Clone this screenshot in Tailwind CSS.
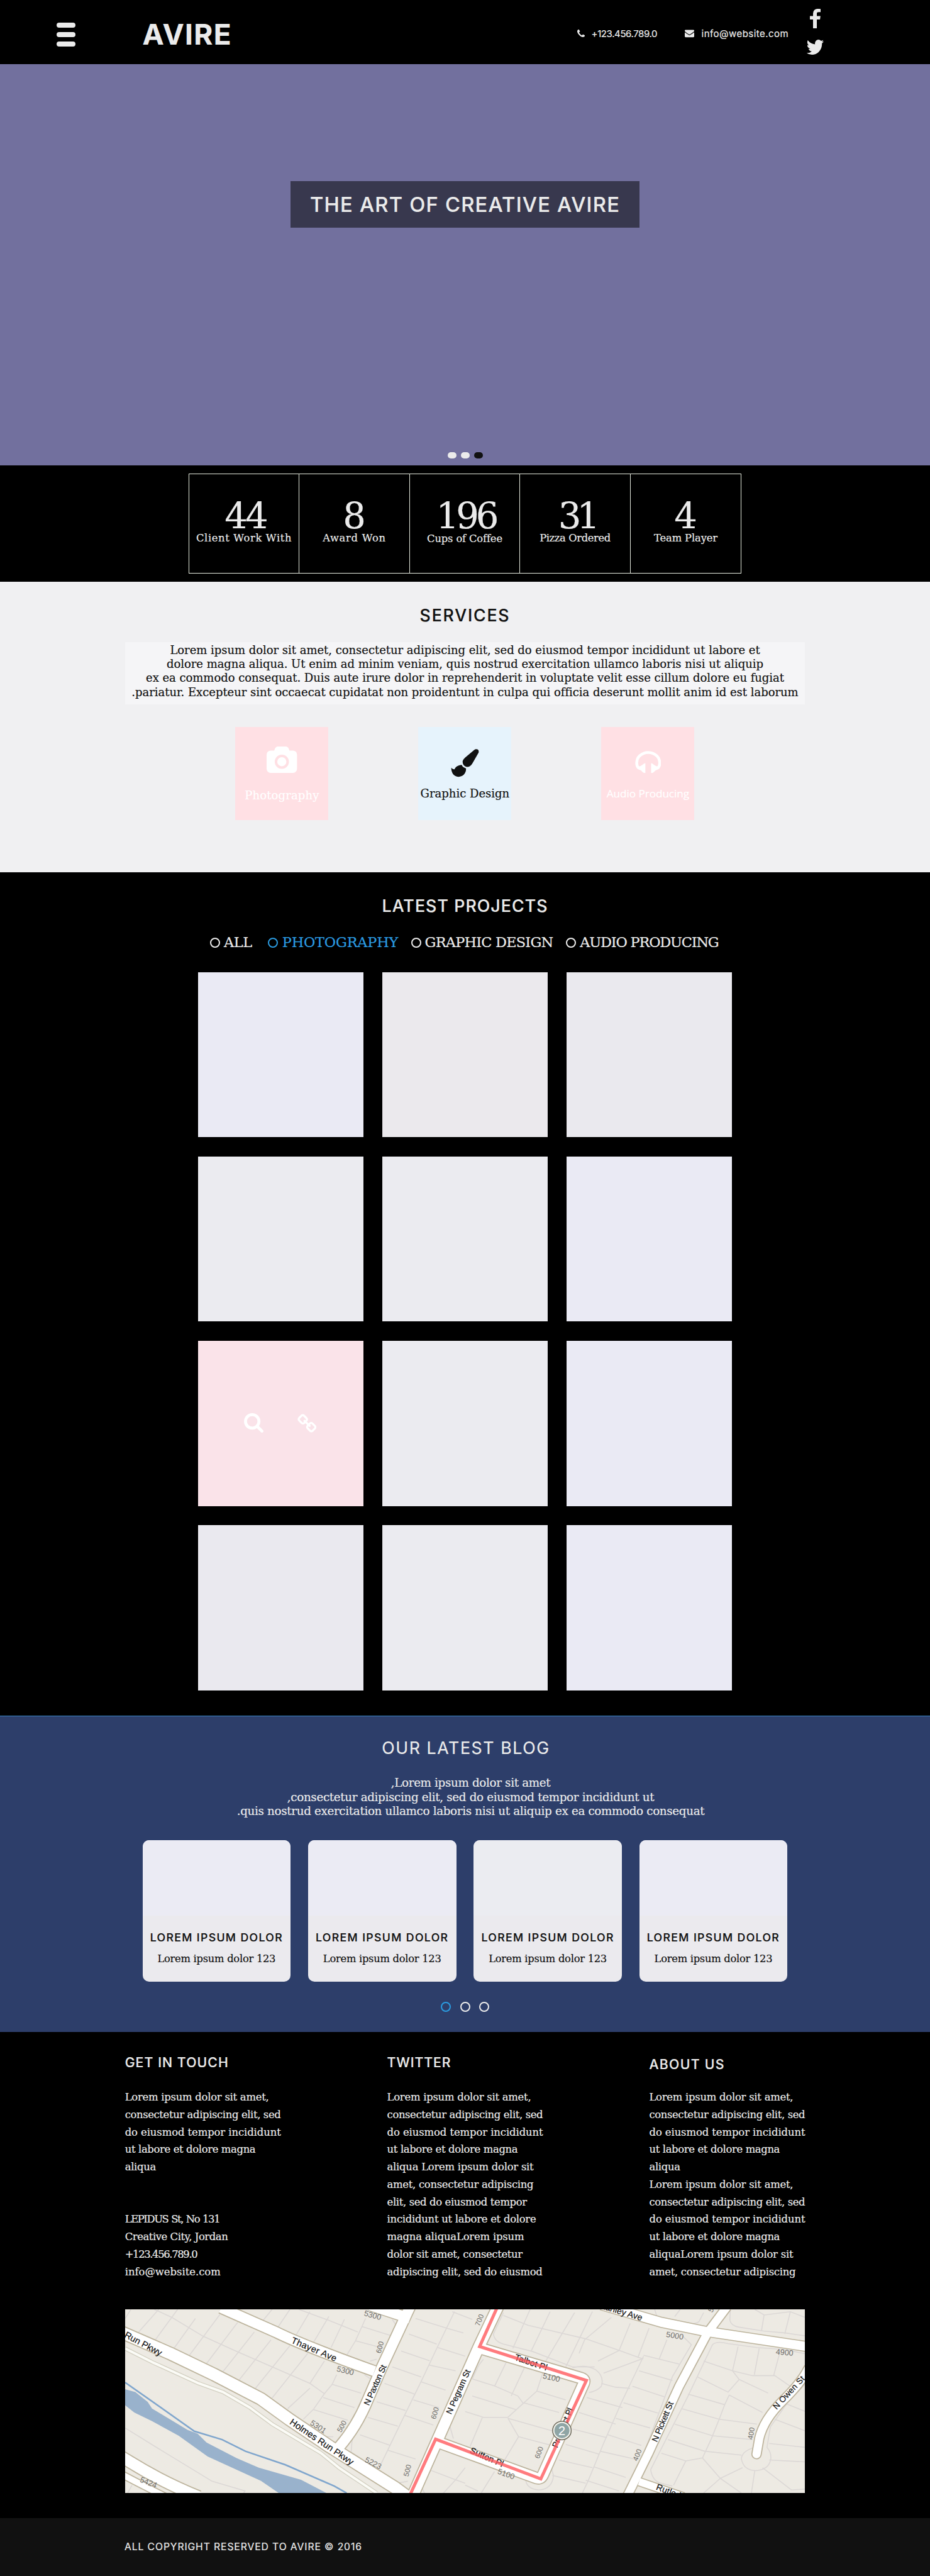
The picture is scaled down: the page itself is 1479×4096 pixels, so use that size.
<!DOCTYPE html>
<html lang="en">
<head>
<meta charset="utf-8">
<title>Avire</title>
<script src="https://cdn.jsdelivr.net/npm/@tailwindcss/browser@4"></script>
</head>
<body class="bg-black text-[#ebebeb] w-[1479px] overflow-x-hidden font-['DejaVu_Serif',serif] [-webkit-text-stroke:0.2px]">

<header class="h-[101.7px] flex items-start pl-[89.6px] pr-[169px] font-['Inter',sans-serif]">
  <div class="mt-9 flex flex-col gap-[6.4px]">
    <i class="block w-[30px] h-[8.4px] rounded-[4px] bg-[#ebebeb]"></i>
    <i class="block w-[30px] h-[8.4px] rounded-[4px] bg-[#ebebeb]"></i>
    <i class="block w-[30px] h-[8.4px] rounded-[4px] bg-[#ebebeb]"></i>
  </div>
  <div class="ml-[107px] mt-[31.5px] text-[45.8px] leading-[46px] font-bold whitespace-nowrap tracking-[1.37px]">AVIRE</div>
  <div class="ml-auto flex items-start text-[15px] leading-5 whitespace-nowrap">
    <svg class="mt-[47px] w-[12px] h-[12px]" viewBox="192 128 1408 1408" fill="#ebebeb"><path d="M1600 1240q0 27-10 70.500t-21 68.500q-21 50-122 106-94 51-186 51-27 0-53-3.500t-57.500-12.500-47-14.500-55.500-20.500-49-18q-98-35-175-83-127-79-264-216t-216-264q-48-77-83-175-3-9-18-49t-20.500-55.500-14.500-47-12.500-57.500-3.500-53q0-92 51-186 56-101 106-122 25-11 68.500-21t70.500-10q14 0 21 3 18 6 53 76 11 19 30 54t35 63.500 31 53.500q3 4 17.500 25t21.500 35.500 7 28.500q0 20-28.500 50t-62 55-62 53-28.500 46q0 9 5 22.500t8.500 20.500 14 24 11.500 19q76 137 174 235t235 174q2 1 19 11.500t24 14 20.500 8.500 22.500 5q18 0 46-28.500t53-62 55-62 50-28.500q14 0 28.500 7t35.500 21.500 25 17.500q25 15 53.500 31t63.500 35 54 30q70 35 76 53 3 7 3 21z"/></svg>
    <div class="ml-[11px] mt-[43.7px] w-[105px] tracking-[-0.39px]">+123.456.789.0</div>
    <svg class="ml-[43.5px] mt-[47px] w-[15px] h-[12.6px]" viewBox="0 256 1792 1408" fill="#ebebeb"><path d="M1792 710v794q0 66-47 113t-113 47h-1472q-66 0-113-47t-47-113v-794q44 49 101 87 362 246 497 345 57 42 92.500 65.500t94.500 48 110 24.500h2q51 0 110-24.500t94.500-48 92.500-65.500q170-123 498-345 57-39 100-87zm0-294q0 79-49 151t-122 123q-376 261-468 325-10 7-42.500 31t-54 38.500-52 32.500-57.500 27-50 9h-2q-23 0-50-9t-57.500-27-52-32.500-54-38.500-42.500-31q-91-64-262-182.500t-205-142.500q-62-42-117-115.500t-55-136.500q0-78 41.500-130t118.500-52h1472q65 0 112.500 47t47.500 113z"/></svg>
    <div class="ml-[11.5px] mt-[43.7px] w-[137.4px] tracking-[0.46px]">info@website.com</div>
    <div class="ml-[29px] mt-[13.9px] flex flex-col items-center">
      <svg class="w-[17px] h-[31.2px]" viewBox="479 0 864 1664" preserveAspectRatio="none" fill="#ebebeb"><path d="M1343 12v264h-157q-86 0-116 36t-30 108v189h293l-39 296h-254v759h-306v-759h-255v-296h255v-218q0-186 104-288.500t277-102.500q147 0 228 12z"/></svg>
      <svg class="mt-[17.8px] w-[28px] h-[24px]" viewBox="64 256 1620 1280" preserveAspectRatio="none" fill="#ebebeb"><path d="M1684 408q-67 98-162 167 1 14 1 42 0 130-38 259.500t-115.500 248.500-184.500 210.500-258 146-323 54.500q-271 0-496-145 35 4 78 4 225 0 401-138-105-2-188-64.500t-114-159.500q33 5 61 5 43 0 85-11-112-23-185.500-111.500t-73.500-205.500v-4q68 38 146 41-66-44-105-115t-39-154q0-88 44-163 121 149 294.500 238.500t371.500 99.500q-8-38-8-74 0-134 94.500-228.500t228.500-94.500q140 0 236 102 109-21 205-78-37 115-142 178 93-10 186-50z"/></svg>
    </div>
  </div>
</header>

<section class="h-[638px] bg-[#72709e] flex flex-col items-center">
  <h1 class="mt-[186.8px] w-[554.6px] h-[74px] bg-[#38384e] flex items-center justify-center font-['Inter',sans-serif] font-medium text-[32.7px] whitespace-nowrap tracking-[1.23px]">THE ART OF CREATIVE AVIRE</h1>
  <div class="mt-[356.8px] flex gap-[7px]">
    <i class="block w-[14px] h-[9.4px] rounded-[5px] bg-[#ebebeb]"></i>
    <i class="block w-[14px] h-[9.4px] rounded-[5px] bg-[#ebebeb]"></i>
    <i class="block w-[14px] h-[9.4px] rounded-[5px] bg-[#111]"></i>
  </div>
</section>

<section class="h-[185px] pt-[12.9px]">
  <div class="mx-auto w-[879.5px] h-[159.4px] border border-[#e6ebdf] grid grid-cols-5 divide-x divide-[#e6ebdf] text-center whitespace-nowrap text-[16.3px] leading-5">
    <div class="pt-[42.3px]"><div class="text-[57.6px] leading-[50px] tracking-[-4px] -mr-1">44</div><span class="tracking-[0.66px]">Client Work With</span></div>
    <div class="pt-[42.3px]"><div class="text-[57.6px] leading-[50px]">8</div><span class="tracking-[0.75px]">Award Won</span></div>
    <div class="pt-[42.3px]"><div class="text-[57.6px] leading-[50px] tracking-[-5px] -mr-1">196</div><div class="pt-px tracking-[-0.12px]">Cups of Coffee</div></div>
    <div class="pt-[42.3px]"><div class="text-[57.6px] leading-[50px] tracking-[-7px] -mr-1.5">31</div><span class="tracking-[-0.35px]">Pizza Ordered</span></div>
    <div class="pt-[42.3px]"><div class="text-[57.6px] leading-[50px]">4</div><span class="tracking-[-0.1px]">Team Player</span></div>
  </div>
</section>

<section class="h-[462.2px] bg-[#f0f0f2] text-[#111] pt-[38.4px]">
  <h2 class="text-center font-['Inter',sans-serif] font-medium text-[26.7px] leading-[30px] tracking-[1.82px]">SERVICES</h2>
  <div class="mt-[27.7px] mx-auto w-[1081.6px] h-[98.9px] bg-[#f5f5f7] pt-[2.3px] text-center text-[18px] leading-[22.2px] whitespace-nowrap tracking-[-0.03px]">
    <p>Lorem ipsum dolor sit amet, consectetur adipiscing elit, sed do eiusmod tempor incididunt ut labore et</p>
    <p>dolore magna aliqua. Ut enim ad minim veniam, quis nostrud exercitation ullamco laboris nisi ut aliquip</p>
    <p>ex ea commodo consequat. Duis aute irure dolor in reprehenderit in voluptate velit esse cillum dolore eu fugiat</p>
    <p>.pariatur. Excepteur sint occaecat cupidatat non proidentunt in culpa qui officia deserunt mollit anim id est laborum</p>
  </div>
  <div class="mt-9 ml-[374.4px] flex gap-[143px] text-center text-[18px] leading-[22px] whitespace-nowrap">
    <div class="w-[148px] h-[148px] bg-[#ffe0e4] text-white flex flex-col items-center">
      <svg class="mt-[31.8px] w-[48.4px] h-[42px]" viewBox="0 0 1920 1664" preserveAspectRatio="none" fill="#fff"><path d="M960 672q119 0 203.500 84.500t84.500 203.500-84.500 203.500-203.500 84.500-203.500-84.500-84.500-203.500 84.500-203.500 203.500-84.500zm704-416q106 0 181 75t75 181v896q0 106-75 181t-181 75h-1408q-106 0-181-75t-75-181v-896q0-106 75-181t181-75h224l51-136q19-49 69.500-84.500t103.500-35.500h512q53 0 103.500 35.500t69.500 84.500l51 136h224zm-704 1152q185 0 316.500-131.500t131.500-316.500-131.500-316.500-316.500-131.500-316.500 131.500-131.500 316.500 131.500 316.500 316.500 131.500z"/></svg>
      <div class="mt-[24.3px] tracking-[0.12px]">Photography</div>
    </div>
    <div class="w-[148px] h-[148px] bg-[#e6f3fc] flex flex-col items-center">
      <svg class="mt-[35.8px] w-[45px] h-[44.5px]" viewBox="226 146 148 146" fill="#111"><path d="M358 147C368 145 374 154 371 165L338 222C330 236 318 241 306 239 292 234 286 222 288 208 291 199 298 194 304 188L346 152C350 149 354 147 358 147ZM228 244C233 250 240 253 245 252 250 240 262 231 283 229 286 238 295 244 305 247 308 268 292 291 266 291 240 291 228 268 228 244Z"/></svg>
      <div class="mt-[15.3px]">Graphic Design</div>
    </div>
    <div class="w-[148px] h-[148px] bg-[#ffe0e4] text-white flex flex-col items-center">
      <svg class="mt-[37.9px] w-[41.5px] h-[35.4px]" viewBox="1173 152 135 116" fill="#fff"><path fill="none" stroke="#fff" stroke-width="15" d="M1190 240C1176 226 1179 194 1196 178 1210 165 1225 160 1241 160 1257 160 1272 165 1286 178 1303 194 1306 226 1292 240"/><path d="M1226 216C1216 216 1208 232 1194 232L1183 243C1190 252 1200 250 1206 256 1212 264 1218 268 1226 268ZM1256 216C1266 216 1274 232 1288 232L1299 243C1292 252 1282 250 1276 256 1270 264 1264 268 1256 268Z"/></svg>
      <div class="mt-[22.1px] text-[17.2px] font-['Open_Sans',sans-serif] tracking-[-0.06px]">Audio Producing</div>
    </div>
  </div>
</section>

<section class="h-[1341.6px] pt-[38.4px]">
  <h2 class="text-center font-['Inter',sans-serif] font-medium text-[26.7px] leading-[30px] tracking-[1.1px]">LATEST PROJECTS</h2>
  <div class="mt-[29px] pl-[333.7px] flex items-start text-[22.4px] leading-7 whitespace-nowrap">
    <i class="mt-[7.1px] size-4 rounded-full border-2 border-[#ebebeb]"></i><div class="ml-[6.4px] w-[45px] tracking-[-0.46px]">ALL</div>
    <i class="ml-[25.3px] mt-[7.1px] size-4 rounded-full border-2 border-[#2b9be0]"></i><div class="ml-[6.4px] w-[184.5px] text-[#2b9be0] tracking-[-0.2px]">PHOTOGRAPHY</div>
    <i class="ml-[20.3px] mt-[7.1px] size-4 rounded-full border-2 border-[#ebebeb]"></i><div class="ml-[6px] w-[204.5px] tracking-[-0.77px]">GRAPHIC DESIGN</div>
    <i class="ml-[20.3px] mt-[7.1px] size-4 rounded-full border-2 border-[#ebebeb]"></i><div class="ml-[6px] w-[221.3px] tracking-[-1.18px]">AUDIO PRODUCING</div>
  </div>
  <div class="mt-[33.6px] ml-[315.1px] grid grid-cols-[262.5px_262.5px_262.5px] auto-rows-[262.5px] gap-[30.6px]">
    <div class="bg-[#eaeaf4]"></div><div class="bg-[#ebe9ed]"></div><div class="bg-[#eae9ee]"></div>
    <div class="bg-[#ebebf0]"></div><div class="bg-[#ebebf0]"></div><div class="bg-[#eaeaf4]"></div>
    <div class="bg-[#fae3e9] flex items-start pl-[72.8px] pt-[115.4px]">
      <svg class="w-[31px] h-[31px]" viewBox="64 128 1664 1664" fill="#fff"><path d="M1216 832q0-185-131.500-316.500t-316.500-131.500-316.500 131.500-131.500 316.500 131.500 316.500 316.500 131.500 316.500-131.500 131.500-316.500zm512 832q0 52-38 90t-90 38q-54 0-90-38l-343-342q-179 124-399 124-143 0-273.500-55.500t-225-150-150-225-55.500-273.500 55.500-273.500 150-225 225-150 273.500-55.500 273.500 55.500 225 150 150 225 55.500 273.500q0 220-124 399l343 343q37 37 37 90z"/></svg>
      <svg class="ml-[54px] mt-px w-[30.6px] h-[30px]" viewBox="0 0 33 32" fill="none" stroke="#fff" stroke-width="3.600" stroke-linecap="round"><rect x="3.300" y="3.500" width="12" height="11.600" rx="3" transform="rotate(45 9.300 9.300)"/><rect x="17.700" y="16.900" width="12" height="11.600" rx="3" transform="rotate(45 23.700 22.700)"/><path d="M12 12l9 8.500"/></svg>
    </div><div class="bg-[#ebebf0]"></div><div class="bg-[#eaeaf4]"></div>
    <div class="bg-[#eae9ef]"></div><div class="bg-[#ebebf0]"></div><div class="bg-[#eaeaf4]"></div>
  </div>
</section>

<section class="h-[503px] bg-[#2d3e6a] border-t border-[#3a86c8] pt-[34.1px]">
  <h2 class="text-center font-['Inter',sans-serif] text-[26.7px] leading-[30px] pl-[3px] tracking-[1.61px]">OUR LATEST BLOG</h2>
  <div class="mt-[30.7px] pl-[18px] text-center text-[18.3px] leading-[22.3px] whitespace-nowrap tracking-[-0.33px]">
    <p>,Lorem ipsum dolor sit amet</p>
    <p>,consectetur adipiscing elit, sed do eiusmod tempor incididunt ut</p>
    <p>.quis nostrud exercitation ullamco laboris nisi ut aliquip ex ea commodo consequat</p>
  </div>
  <div class="mt-[34.8px] ml-[226.5px] flex gap-[27.7px] text-center text-[#111] whitespace-nowrap">
    <article class="w-[235.7px] h-[224.9px] rounded-[10px] overflow-hidden bg-[#ebeaee]"><div class="h-[120.5px] bg-[#ebebf4]"></div><h3 class="mt-[24.6px] font-['Inter',sans-serif] text-[17.7px] leading-5 font-medium tracking-[1.35px]">LOREM IPSUM DOLOR</h3><p class="mt-[14.4px] text-[16.3px] leading-5 tracking-[-0.25px]">Lorem ipsum dolor 123</p></article>
    <article class="w-[235.7px] h-[224.9px] rounded-[10px] overflow-hidden bg-[#ebeaee]"><div class="h-[120.5px] bg-[#ebebf4]"></div><h3 class="mt-[24.6px] font-['Inter',sans-serif] text-[17.7px] leading-5 font-medium tracking-[1.35px]">LOREM IPSUM DOLOR</h3><p class="mt-[14.4px] text-[16.3px] leading-5 tracking-[-0.25px]">Lorem ipsum dolor 123</p></article>
    <article class="w-[235.7px] h-[224.9px] rounded-[10px] overflow-hidden bg-[#ebeaee]"><div class="h-[120.5px] bg-[#ebecf1]"></div><h3 class="mt-[24.6px] font-['Inter',sans-serif] text-[17.7px] leading-5 font-medium tracking-[1.35px]">LOREM IPSUM DOLOR</h3><p class="mt-[14.4px] text-[16.3px] leading-5 tracking-[-0.25px]">Lorem ipsum dolor 123</p></article>
    <article class="w-[235.7px] h-[224.9px] rounded-[10px] overflow-hidden bg-[#ebeaee]"><div class="h-[120.5px] bg-[#ebebf4]"></div><h3 class="mt-[24.6px] font-['Inter',sans-serif] text-[17.7px] leading-5 font-medium tracking-[1.35px]">LOREM IPSUM DOLOR</h3><p class="mt-[14.4px] text-[16.3px] leading-5 tracking-[-0.25px]">Lorem ipsum dolor 123</p></article>
  </div>
  <div class="mt-[32px] flex justify-center gap-[14.6px]">
    <i class="size-4 rounded-full border-2 border-[#2b9be0]"></i><i class="size-4 rounded-full border-2 border-[#ebebeb]"></i><i class="size-4 rounded-full border-2 border-[#ebebeb]"></i>
  </div>
</section>

<footer>
  <div class="h-[773px] pt-[35.1px] px-[198.7px]">
    <div class="grid grid-cols-[416.9px_416.9px_1fr] h-[350.5px] whitespace-nowrap text-[16.4px] leading-[27.74px]">
      <div>
        <h3 class="mb-[30.7px] font-['Inter',sans-serif] font-medium text-[21.2px] leading-6 tracking-[1.09px]">GET IN TOUCH</h3>
        <p class="tracking-[-0.24px]">Lorem ipsum dolor sit amet,</p>
        <p class="tracking-[-0.37px]">consectetur adipiscing elit, sed</p>
        <p class="tracking-[-0.07px]">do eiusmod tempor incididunt</p>
        <p class="tracking-[-0.35px]">ut labore et dolore magna</p>
        <p class="tracking-[-0.32px]">aliqua</p>
        <p class="mt-[55.48px] tracking-[-1.4px] [word-spacing:1px]">LEPIDUS St, No 131</p>
        <p class="tracking-[-0.44px]">Creative City, Jordan</p>
        <p class="tracking-[-1.36px]">+123.456.789.0</p>
        <p>info@website.com</p>
      </div>
      <div>
        <h3 class="mb-[30.7px] font-['Inter',sans-serif] font-medium text-[21.2px] leading-6 tracking-[0.99px]">TWITTER</h3>
        <p class="tracking-[-0.24px]">Lorem ipsum dolor sit amet,</p>
        <p class="tracking-[-0.37px]">consectetur adipiscing elit, sed</p>
        <p class="tracking-[-0.07px]">do eiusmod tempor incididunt</p>
        <p class="tracking-[-0.35px]">ut labore et dolore magna</p>
        <p class="tracking-[-0.24px]">aliqua Lorem ipsum dolor sit</p>
        <p class="tracking-[-0.28px]">amet, consectetur adipiscing</p>
        <p class="tracking-[-0.35px]">elit, sed do eiusmod tempor</p>
        <p class="tracking-[-0.25px]">incididunt ut labore et dolore</p>
        <p class="tracking-[-0.17px]">magna aliquaLorem ipsum</p>
        <p class="tracking-[-0.33px]">dolor sit amet, consectetur</p>
        <p class="tracking-[-0.32px]">adipiscing elit, sed do eiusmod</p>
      </div>
      <div>
        <h3 class="pt-[3.2px] mb-[27.5px] font-['Inter',sans-serif] font-medium text-[21.2px] leading-6 tracking-[1.33px]">ABOUT US</h3>
        <p class="tracking-[-0.24px]">Lorem ipsum dolor sit amet,</p>
        <p class="tracking-[-0.37px]">consectetur adipiscing elit, sed</p>
        <p class="tracking-[-0.07px]">do eiusmod tempor incididunt</p>
        <p class="tracking-[-0.35px]">ut labore et dolore magna</p>
        <p class="tracking-[-0.32px]">aliqua</p>
        <p class="tracking-[-0.24px]">Lorem ipsum dolor sit amet,</p>
        <p class="tracking-[-0.37px]">consectetur adipiscing elit, sed</p>
        <p class="tracking-[-0.07px]">do eiusmod tempor incididunt</p>
        <p class="tracking-[-0.35px]">ut labore et dolore magna</p>
        <p class="tracking-[-0.2px]">aliquaLorem ipsum dolor sit</p>
        <p class="tracking-[-0.28px]">amet, consectetur adipiscing</p>
      </div>
    </div>

    <!-- Street map. Line widths stay in screen pixels; labels are scaled back to an even ratio. -->
    <svg class="block mt-[54.5px] w-[1081.6px] h-[292.2px] overflow-hidden bg-[#edeae3] [&_path]:[vector-effect:non-scaling-stroke]" viewBox="39 33 3058 948" preserveAspectRatio="none" font-family="Liberation Sans, sans-serif">
      <!-- parcel boundaries -->
      <g fill="none" stroke="#dcd8d6" stroke-width="1.600">
        <path d="M170 33L250 75L390 172L530 245L710 335L870 415L935 468L885 550L840 600M65 33L39 80M190 33L100 150M275 33L175 190M355 80L255 240M465 60L325 275M545 100L400 320M620 150L475 360M695 190L550 400M780 220L625 440M860 260L700 490M935 300L870 415M870 440L770 545M990 370L970 420L935 468"/>
        <path d="M700 33L645 110M780 33L720 135M820 33L955 90L1085 150M870 45L800 180M955 70L880 215M1025 85L965 230M1120 80L1075 195L1035 270M1105 122L1230 167M1075 195L1205 235M970 420L1100 465M930 488L1070 540M885 550L1040 605M1240 85L1255 110M1140 300L1170 290M1115 370L1140 390M940 690L975 690M1060 700L1055 770L1110 810"/>
        <path d="M1520 45L1440 235L1370 405L1295 580L1190 830M1345 80L1490 132L1560 155M1315 160L1440 212M1280 248L1408 298M1240 330L1370 382M1205 415L1340 470M1170 510L1300 555M1130 590L1265 636M1095 680L1230 735M1220 760L1345 805M1445 230L1568 275M1405 320L1525 350M1370 407L1480 450M1335 500L1450 540M1295 580L1425 630M1510 45L1600 85M1500 640L1515 700"/>
        <path d="M39 645L180 745L430 920L578 970L572 981M1450 755L1405 860L1525 912L1568 930M1568 850L1525 912L1470 981M1360 920L1385 981M1260 930L1310 920M70 940L50 981"/>
        <path d="M1740 50L1695 160Q1700 200 1740 212L1870 250L2050 330L2150 330M1740 65L1850 115L2110 185L2260 245L2365 288L2190 362M1860 33L1782 235M1950 45L1866 245M2060 50L1930 300M2140 45L2020 330M2225 75L2105 190L2080 260M2310 105L2260 245L2165 300M2395 130L2345 280M2475 190L2440 290M2540 165L2585 215L2500 380L2370 780"/>
        <path d="M2050 335Q2110 315 2155 345Q2195 380 2180 430Q2160 455 2125 462M2180 415L2245 435L2310 440M2370 275L2270 515L2190 725L2120 920L2095 981M2370 270L2530 315M2350 350L2500 400M2320 430L2465 485M2280 515L2435 568M2245 595L2400 645M2210 680L2360 735M2175 765L2330 805M2145 845L2290 900M2110 915L2260 970M2115 488L2275 540M2080 565L2245 625M2050 650L2205 695M2020 730L2170 780M1990 810L2140 850M1960 890L2110 930"/>
        <path d="M1600 392L1700 428L1805 480L1830 520M1600 480L1795 550M1650 290L1630 320L1600 390M1755 300L1700 430M1840 320L1775 480M1920 350L1890 455L1760 590L1650 590L1568 560M1890 455L2020 500M1830 515L1990 565M1760 595L1960 660M1760 595L1808 690L1740 820M1808 690L1990 745M1645 592L1590 740M1568 940L1625 970M1700 870L1640 981M1840 905Q1840 960 1900 965Q1960 960 1965 890L1955 850"/>
        <path d="M2640 50L2620 95Q2600 115 2560 100L2430 70L2420 33M2535 33L2510 70M2760 33L2758 90Q2765 120 2800 125L2910 145L3010 155L3097 170M2870 33L2912 62L3030 45L3097 75M2912 62L2900 145M3030 45L3005 160M2680 215Q2700 195 2750 210L2880 230L3000 240L3097 262M2680 215L2570 480L2402 860Q2410 920 2450 930L2500 945M2640 300L2770 350L2860 375L2960 375L3030 430M2795 225L2770 350L2800 395L2750 460L2610 380M2890 235L2868 370M2985 245L2955 375M3097 290L3097 400"/>
        <path d="M2570 470L2735 525L2710 600L2675 700L2635 800L2560 815L2505 940M2755 475L2735 525M2755 475L2905 565M2800 395L2930 465M2540 545L2710 600L2880 625M2510 625L2680 685L2860 705M2480 705L2645 765L2810 785M2450 775L2560 815M2635 800L2715 905L2815 850M2715 905L2810 981M2715 905L2640 981M2870 865L2855 981M2905 850L3035 965L3097 960M2935 810L3097 820M2935 725L3097 745M2960 600L3097 660M3010 520L3097 560M2870 745Q2810 765 2810 805Q2820 865 2875 865Q2935 860 2942 805Q2945 770 2925 745L2940 640L3020 510L3097 420"/>
      </g>

      <!-- river and stream -->
      <path fill="#99b2cc" d="M39 445L85 460L140 510L160 545L320 655L365 675L405 720L540 800L640 850L830 912L945 981L730 981L650 918L410 792L280 685L160 610L80 565L39 528Z"/>
      <path fill="none" stroke="#80a6cd" stroke-width="2.600" d="M39 410L200 540L350 662L475 705L580 765L760 835L980 945L1035 981"/>

      <!-- footpath -->
      <g fill="none" stroke-linejoin="round"><path stroke="#d3d0c2" stroke-width="6.500" d="M39 235L160 305L370 415L480 460L600 540L700 625L920 775L1000 850L1170 981"/><path stroke="#fbfbf6" stroke-width="4" d="M39 235L160 305L370 415L480 460L600 540L700 625L920 775L1000 850L1170 981"/></g>

      <!-- road casings -->
      <g fill="none" stroke="#bdb49d" stroke-linejoin="round">
        <path stroke-width="22" d="M0 140L240 260L440 370L650 495L780 603L960 742L1255 955L1320 1010"/>
        <path stroke-width="19.500" d="M470 25L720 152Q840 220 1160 352"/>
        <path stroke-width="19.500" d="M1320 20L1190 340L1130 500Q1080 640 1000 745"/>
        <path stroke-width="19" d="M1140 12L1320 80"/>
        <path stroke-width="20.500" d="M1715 20L1630 225L1450 690L1330 1000"/>
        <path stroke-width="20" d="M1630 232L2090 388Q2108 395 2102 412L1918 885Q1908 915 1880 900L1445 718"/>
        <path stroke-width="16.500" d="M2745 20L2660 150L2530 430L2390 780L2295 1000"/>
        <path stroke-width="17.500" d="M2180 10L2450 100L2650 147L3110 226"/>
        <path stroke-width="16.500" stroke-linecap="round" d="M3110 340Q3080 410 3000 500Q2910 600 2890 700L2878 780"/>
        <path stroke-width="15" d="M2350 922L2550 1000"/>
        <path stroke-width="21" d="M0 778L60 820Q200 920 370 1000"/>
        <path stroke-width="13" d="M0 870L80 918L220 1000"/>
      </g>
      <g fill="none" stroke="#fff" stroke-linejoin="round">
        <path stroke-width="18.500" d="M0 140L240 260L440 370L650 495L780 603L960 742L1255 955L1320 1010"/>
        <path stroke-width="16" d="M470 25L720 152Q840 220 1160 352"/>
        <path stroke-width="16" d="M1320 20L1190 340L1130 500Q1080 640 1000 745"/>
        <path stroke-width="16" d="M1140 12L1320 80"/>
        <path stroke-width="17" d="M1715 20L1630 225L1450 690L1330 1000"/>
        <path stroke-width="16.500" d="M1630 232L2090 388Q2108 395 2102 412L1918 885Q1908 915 1880 900L1445 718"/>
        <path stroke-width="13" d="M2745 20L2660 150L2530 430L2390 780L2295 1000"/>
        <path stroke-width="14.500" d="M2180 10L2450 100L2650 147L3110 226"/>
        <path stroke-width="13" stroke-linecap="round" d="M3110 340Q3080 410 3000 500Q2910 600 2890 700L2878 780"/>
        <path stroke-width="11.500" d="M2350 922L2550 1000"/>
        <path stroke-width="17.500" d="M0 778L60 820Q200 920 370 1000"/>
        <path stroke-width="9.500" d="M0 870L80 918L220 1000"/>
      </g>

      <!-- street names -->
      <g fill="#111" font-size="14.500" stroke="#111" stroke-width=".2">
        <text transform="translate(33 175) scale(2.827 3.244) rotate(28)">Run Pkwy</text>
        <text transform="translate(783 205) scale(2.827 3.244) rotate(23)" textLength="77">Thayer Ave</text>
        <text transform="translate(776 622) scale(2.827 3.244) rotate(34)" textLength="119">Holmes Run Pkwy</text>
        <text transform="translate(1135 532) scale(2.827 3.244) rotate(-66)" textLength="69" font-size="13.500">N Paxton St</text>
        <text transform="translate(1505 577) scale(2.827 3.244) rotate(-66)" textLength="76" font-size="13.500">N Pegram St</text>
        <text transform="translate(1788 293) scale(2.827 3.244) rotate(19)" font-size="14">Talbot Pl</text>
        <text transform="translate(1586 772) scale(2.827 3.244) rotate(24)" font-size="14">Sutton Pl</text>
        <text transform="translate(1982 750) scale(2.827 3.244) rotate(-68)" textLength="67" font-size="13.500">Prospect Pl</text>
        <text transform="translate(2430 720) scale(2.827 3.244) rotate(-67)" textLength="68" font-size="13.500">N Pickett St</text>
        <text transform="translate(2968 552) scale(2.827 3.244) rotate(-47)" textLength="67" font-size="13.500">N Owen St</text>
        <text transform="translate(2360 92) scale(2.827 3.244) rotate(17)" text-anchor="end" font-size="14">Stanley Ave</text>
        <text transform="translate(2424 962) scale(2.827 3.244) rotate(21)" font-size="14">Rutledge Dr</text>
      </g>
      <!-- block numbers -->
      <g fill="#6f6e6b" font-size="12.500">
        <text transform="translate(1111 65) scale(2.827 3.244) rotate(15)">5300</text>
        <text transform="translate(1188 262) scale(2.827 3.244) rotate(-75)" font-size="11.500">600</text>
        <text transform="translate(988 352) scale(2.827 3.244) rotate(14)">5300</text>
        <text transform="translate(868 625) scale(2.827 3.244) rotate(34)">5301</text>
        <text transform="translate(1010 670) scale(2.827 3.244) rotate(-62)" font-size="11.500">500</text>
        <text transform="translate(1435 602) scale(2.827 3.244) rotate(-74)" font-size="11.500">600</text>
        <text transform="translate(1114 818) scale(2.827 3.244) rotate(27)">5223</text>
        <text transform="translate(1312 898) scale(2.827 3.244) rotate(-75)" font-size="11.500">500</text>
        <text transform="translate(103 922) scale(2.827 3.244) rotate(22)">5424</text>
        <text transform="translate(1632 122) scale(2.827 3.244) rotate(-68)" font-size="11.500">700</text>
        <text transform="translate(1915 388) scale(2.827 3.244) rotate(13)">5100</text>
        <text transform="translate(2470 175) scale(2.827 3.244) rotate(9)">5000</text>
        <text transform="translate(2964 265) scale(2.827 3.244) rotate(5)">4900</text>
        <text transform="translate(1711 880) scale(2.827 3.244) rotate(20)">5100</text>
        <text transform="translate(1901 805) scale(2.827 3.244) rotate(-70)" font-size="11.500">600</text>
        <text transform="translate(2342 818) scale(2.827 3.244) rotate(-68)" font-size="11.500">400</text>
        <text transform="translate(2860 706) scale(2.827 3.244) rotate(-80)" font-size="11.500">400</text>
        <text transform="translate(2678 52) scale(2.827 3.244) rotate(-60)" font-size="11.500">500</text>
      </g>

      <!-- highlighted route -->
      <path fill="none" stroke="#ff5a5e" stroke-opacity=".8" stroke-width="5" d="M1713 20L1633 225L2113 400L1908 908L1435 703L1320 990"/>
      <g transform="translate(2003 658) scale(2.827 3.244)">
        <circle r="15.500" fill="#6d6a5c"/><circle r="14" fill="#f4f4ee"/><circle r="12" fill="#8fa5a5"/>
        <text y="7" text-anchor="middle" font-size="20" fill="#fff" stroke="none">2</text>
      </g>
    </svg>
  </div>
  <div class="h-[91.6px] bg-[#111] pt-[35.8px] pl-[198px] font-['Inter',sans-serif] text-[15.7px] leading-5 tracking-[0.91px]">ALL COPYRIGHT RESERVED TO AVIRE © 2016</div>
</footer>
</body>
</html>
